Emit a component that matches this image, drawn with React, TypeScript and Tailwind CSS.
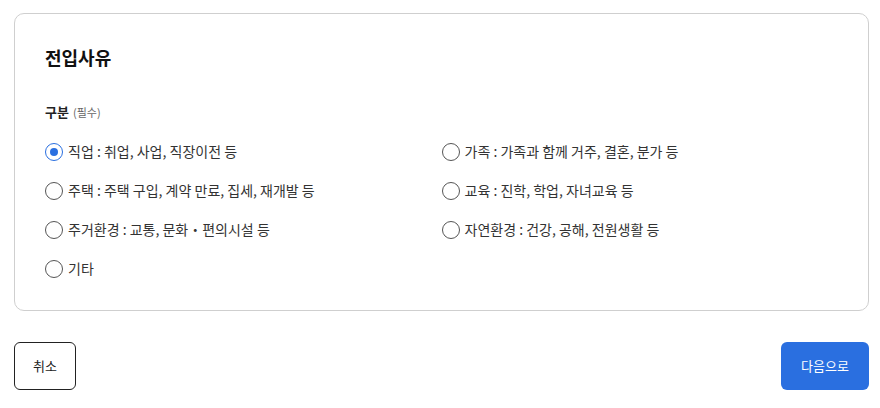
import React from 'react';

const options = [
  '직업 : 취업, 사업, 직장이전 등',
  '가족 : 가족과 함께 거주, 결혼, 분가 등',
  '주택 : 주택 구입, 계약 만료, 집세, 재개발 등',
  '교육 : 진학, 학업, 자녀교육 등',
  '주거환경 : 교통, 문화・편의시설 등',
  '자연환경 : 건강, 공해, 전원생활 등',
  '기타',
];

const Radio: React.FC<{ checked: boolean }> = ({ checked }) =>
  checked ? (
    <span className="w-[18px] h-[18px] rounded-full border-[1.5px] border-[#2a6fe0] flex items-center justify-center shrink-0">
      <span className="w-[8px] h-[8px] rounded-full bg-[#2a6fe0]" />
    </span>
  ) : (
    <span className="w-[18px] h-[18px] rounded-full border-[1.5px] border-[#555] shrink-0" />
  );

export default function App() {
  const selected = 0;
  return (
    <div
      className="w-[880px] h-[408px] bg-white pt-[13px] pl-[14px] pr-[11px]"
      style={{ fontFamily: '"Noto Sans CJK KR", "Noto Sans", sans-serif' }}
    >
      <div className="border border-[#cfcfcf] rounded-[10px] h-[298px] px-[30px] pt-[30px]">
        <h2 className="text-[18px] leading-[27px] font-bold text-[#111]">전입사유</h2>
        <div className="mt-[31px] flex items-baseline gap-1">
          <span className="text-[13px] font-bold text-[#222]">구분</span>
          <span className="text-[11px] text-[#666]">(필수)</span>
        </div>
        <div className="grid grid-cols-2 mt-[18px] gap-y-[15px]">
          {options.map((o, i) => (
            <label key={o} className="flex items-center gap-[5px] h-[24px]">
              <Radio checked={i === selected} />
              <span className="text-[14px] text-[#333]">{o}</span>
            </label>
          ))}
        </div>
      </div>
      <div className="flex justify-between mt-[31px]">
        <button className="w-[62px] h-[48px] border border-[#222] rounded-[6px] text-[13px] text-[#222] bg-white">
          취소
        </button>
        <button className="w-[88px] h-[48px] rounded-[6px] text-[13px] text-white bg-[#2a6fe0]">
          다음으로
        </button>
      </div>
    </div>
  );
}
